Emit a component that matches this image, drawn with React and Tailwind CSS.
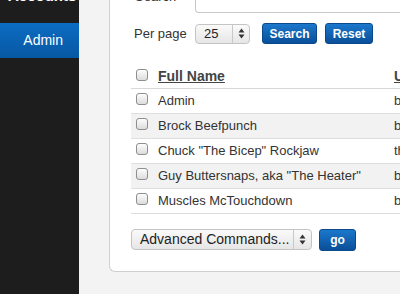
const users = [
  { name: 'Admin', other: 'b' },
  { name: 'Brock Beefpunch', other: 'b' },
  { name: 'Chuck "The Bicep" Rockjaw', other: 'th' },
  { name: 'Guy Buttersnaps, aka "The Heater"', other: 'b' },
  { name: 'Muscles McTouchdown', other: 'b' },
]

function Checkbox() {
  return (
    <span className="inline-block h-[12px] w-[12px] shrink-0 rounded-[3px] border border-[#8f8f8f] bg-gradient-to-b from-[#fdfdfd] to-[#dcdcdc]" />
  )
}

function Spinner() {
  return (
    <svg width="7" height="11" viewBox="0 0 7 11">
      <path d="M3.5 0.5 L6.5 4.5 L0.5 4.5 Z" fill="#333" />
      <path d="M3.5 10.5 L6.5 6.5 L0.5 6.5 Z" fill="#333" />
    </svg>
  )
}

function BlueButton({ children, className = '' }) {
  return (
    <button
      type="button"
      className={`flex h-[21px] items-center justify-center rounded-[3px] border border-[#0a4a8c] bg-gradient-to-b from-[#1b78cc] to-[#0a4f99] text-[12px] font-bold text-white ${className}`}
    >
      {children}
    </button>
  )
}

export default function App() {
  return (
    <div className="flex h-[294px] w-[400px] overflow-hidden font-['Liberation_Sans',Arial,sans-serif]">
      <aside className="w-[79px] shrink-0 bg-[#1d1d1d]">
        <div className="-mt-[13px] h-[36px] pl-[8px] text-[15px] font-bold leading-[17px] text-white">
          Accounts
        </div>
        <div className="flex h-[35px] items-center justify-end bg-gradient-to-b from-[#0c6cc2] to-[#0758a3] pr-[16px] text-[14px] text-white">
          Admin
        </div>
      </aside>

      <main className="flex-1 bg-[#f3f3f3] pl-[30px]">
        <div className="-mt-[20px] h-[292px] rounded-bl-[6px] border-b border-l border-[#cfcfcf] bg-white pl-[21px]">
          <div className="flex h-[33px] items-end">
            <span className="mb-[10px] w-[64px] pl-[4px] text-[13px] leading-[13px] text-[#333]">Search</span>
            <div className="h-[33px] flex-1 rounded-bl-[4px] border-b border-l border-[#c8c8c8]" />
          </div>

          <div className="mt-[10px] flex h-[21px] items-center">
            <span className="w-[64px] pl-[3px] text-[13px] text-[#333]">Per page</span>
            <div className="flex h-[20px] w-[55px] items-center rounded-[4px] border border-[#c4c4c4] bg-gradient-to-b from-[#fafafa] to-[#e6e6e6]">
              <span className="flex-1 pl-[8px] text-[13px] text-[#222]">25</span>
              <span className="flex h-full w-[17px] items-center justify-center border-l border-[#c8c8c8]">
                <Spinner />
              </span>
            </div>
            <BlueButton className="ml-[12px] w-[55px]">Search</BlueButton>
            <BlueButton className="ml-[8px] w-[48px]">Reset</BlueButton>
          </div>

          <table className="mt-[22px] w-[300px] border-collapse text-[13px] text-[#333]">
            <thead>
              <tr className="h-[22px] border-b border-[#d8d8d8]">
                <th className="w-[27px] pl-[5px] text-left align-middle">
                  <Checkbox />
                </th>
                <th className="w-[236px] text-left text-[14px] font-bold text-[#444] underline">Full Name</th>
                <th className="text-left text-[14px] font-bold text-[#444] underline">U</th>
              </tr>
            </thead>
            <tbody>
              {users.map((u, i) => (
                <tr key={u.name} className={`h-[25px] border-b border-[#dedede] ${i % 2 === 1 ? 'bg-[#f2f2f2]' : 'bg-white'}`}>
                  <td className="pl-[5px] align-middle">
                    <Checkbox />
                  </td>
                  <td>{u.name}</td>
                  <td>{u.other}</td>
                </tr>
              ))}
            </tbody>
          </table>

          <div className="mt-[15px] flex items-center">
            <div className="flex h-[21px] w-[181px] items-center rounded-[4px] border border-[#c4c4c4] bg-gradient-to-b from-[#fafafa] to-[#e6e6e6]">
              <span className="flex-1 pl-[8px] text-[14px] text-[#222]">Advanced Commands...</span>
              <span className="flex h-full w-[18px] items-center justify-center border-l border-[#c8c8c8]">
                <Spinner />
              </span>
            </div>
            <BlueButton className="ml-[7px] h-[22px] w-[37px]">go</BlueButton>
          </div>
        </div>
      </main>
    </div>
  )
}
